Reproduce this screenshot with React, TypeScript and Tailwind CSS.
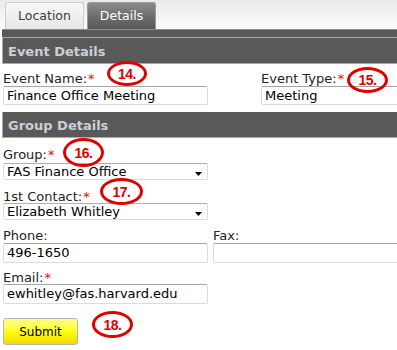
import React from "react";

const Star = () => <span className="text-[#ff0000] ml-[1px]">*</span>;

const Arrow = () => (
  <svg width="7" height="4" viewBox="0 0 7 4" className="absolute right-[5px] top-[8px]">
    <path d="M0 0 L7 0 L3.5 4 Z" fill="#000" />
  </svg>
);

const Circle = ({ x, y, w, h, label }: { x: number; y: number; w: number; h: number; label: string }) => (
  <div
    className="absolute border-[3px] border-[#e00000] rounded-[50%] flex items-center justify-center text-[#e00000] font-bold text-[14px] tracking-[-0.5px] leading-none"
    style={{ left: x, top: y, width: w, height: h, fontFamily: '"Liberation Sans", Arial, sans-serif' }}
  >
    {label}
  </div>
);

const inputCls =
  "h-[19px] border border-[#dcdcdc] border-t-[#a4a4a4] rounded-[2px] pl-[3px] flex items-center text-[13px] text-black bg-white";
const selectCls =
  "relative h-[17px] border border-[#dcdcdc] border-t-[#b0b0b0] rounded-[2px] pl-[3px] flex items-center text-[13px] text-black bg-white";

const Header = ({ title }: { title: string }) => (
  <div className="ml-[2px] h-[26px] bg-[#595959] border-l border-b border-[#aaaaaa] pl-[5px] pt-[3px] leading-[22px] text-[13px] font-bold text-[#c9d0d8]">
    {title}
  </div>
);

export default function App() {
  return (
    <div
      className="relative w-[397px] h-[350px] bg-white overflow-hidden text-[#222]"
      style={{ fontFamily: '"DejaVu Sans", Verdana, sans-serif' }}
    >
      {/* tab bar */}
      <div className="h-[29px] bg-gradient-to-b from-[#ebebeb] to-[#fbfbfb] flex items-end pl-[5px] gap-[3px]">
        <div className="w-[79px] h-[27px] rounded-t-[3px] border border-b-0 border-[#cfcfcf] bg-gradient-to-b from-[#f8f8f8] to-[#e7e7e7] flex items-center justify-center text-[12.5px] text-[#3a3a48]">
          Location
        </div>
        <div className="w-[69px] h-[27px] rounded-t-[3px] border border-b-0 border-[#9a9a9a] bg-gradient-to-b from-[#8c8c8c] via-[#6e6e6e] to-[#585858] flex items-center justify-center text-[12.5px] text-white">
          Details
        </div>
      </div>
      <div className="ml-[2px] h-[9px] border-t border-[#8c8c8c] bg-[#5a5a5a] border-b border-b-[#a9a9a9]" />
      <Header title="Event Details" />

      <div className="pl-[3px]">
        <div className="flex mt-[7px]">
          <div className="w-[205px] shrink-0 flex flex-col">
            <div className="h-[15px] leading-[15px] text-[13px]">
              Event Name:<Star />
            </div>
            <div className={inputCls}>Finance Office Meeting</div>
          </div>
          <div className="ml-[53px] w-[150px] shrink-0 flex flex-col">
            <div className="h-[15px] leading-[15px] text-[13px]">
              Event Type:<Star />
            </div>
            <div className={inputCls + " h-[18px]"}>Meeting</div>
          </div>
        </div>
      </div>

      <div className="mt-[7px]">
        <Header title="Group Details" />
      </div>

      <div className="pl-[3px] flex flex-col">
        <div className="mt-[9px] h-[15px] leading-[15px] text-[13px]">
          Group:<Star />
        </div>
        <div className={selectCls + " w-[205px] mt-[1px]"}>
          FAS Finance Office
          <Arrow />
        </div>

        <div className="mt-[9px] h-[15px] leading-[15px] text-[13px]">
          1st Contact:<Star />
        </div>
        <div className={selectCls + " w-[205px] mt-[-1px]"}>
          Elizabeth Whitley
          <Arrow />
        </div>

        <div className="flex mt-[8px]">
          <div className="w-[205px] shrink-0 flex flex-col">
            <div className="h-[15px] leading-[15px] text-[13px]">Phone:</div>
            <div className={inputCls + " h-[20px]"}>496-1650</div>
          </div>
          <div className="ml-[5px] w-[200px] shrink-0 flex flex-col">
            <div className="h-[15px] leading-[15px] text-[13px]">Fax:</div>
            <div className={inputCls + " h-[20px]"}></div>
          </div>
        </div>

        <div className="mt-[7px] h-[15px] leading-[15px] text-[13px]">
          Email:<Star />
        </div>
        <div className={inputCls + " w-[205px] mt-[-1px] h-[20px]"}>ewhitley@fas.harvard.edu</div>

        <div className="mt-[14px] w-[75px] h-[27px] rounded-[3px] border border-[#b5b5b5] bg-gradient-to-b from-[#ffff80] via-[#ffff10] to-[#f2d800] flex items-center justify-center text-[12px] text-black">
          Submit
        </div>
      </div>

      <Circle x={107} y={61} w={40} h={25} label="14." />
      <Circle x={347} y={67} w={41} h={26} label="15." />
      <Circle x={63} y={138} w={41} h={29} label="16." />
      <Circle x={100} y={178} w={43} h={27} label="17." />
      <Circle x={92} y={311} w={41} h={27} label="18." />
    </div>
  );
}
